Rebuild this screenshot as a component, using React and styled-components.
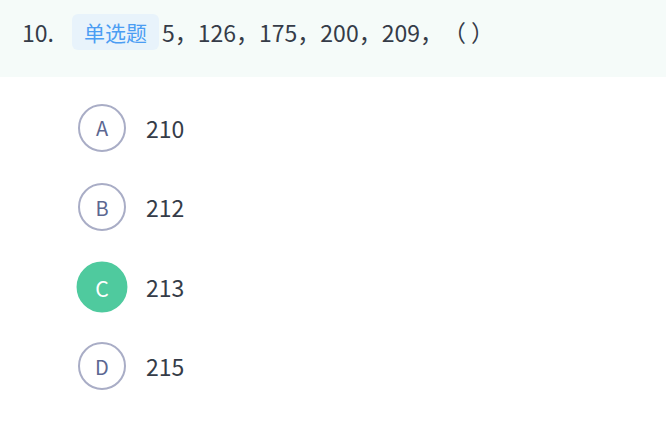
import React from 'react';
import styled, { createGlobalStyle } from 'styled-components';

const GlobalStyle = createGlobalStyle`
	body {
		margin: 0;
		background: #fff;
		font-family: 'Noto Sans CJK SC', 'Noto Sans', sans-serif;
		text-spacing-trim: space-all;
	}
`;

const Page = styled.main`
	width: 666px;
	height: 435px;
	background: #fff;
`;

const QuestionHead = styled.header`
	height: 77px;
	background: #f5fbf9;
	display: flex;
	align-items: center;
	padding: 0 0 13px 22px;
	box-sizing: border-box;
	color: #353c48;
`;

const Number = styled.span`
	width: 50px;
	font-size: 23px;
`;

const TypeBadge = styled.span`
	background: #e8f3fb;
	color: #4b9df3;
	font-size: 21px;
	border-radius: 6px;
	padding: 0 12px;
	height: 36px;
	line-height: 36px;
	margin-right: 3px;
`;

const Stem = styled.span`
	font-size: 23px;
	text-spacing-trim: space-all;
`;

const OptionList = styled.ul`
	list-style: none;
	margin: 0;
	padding: 26.5px 0 0 78px;
	display: flex;
	flex-direction: column;
	gap: 31.5px;
`;

const Option = styled.li`
	display: flex;
	align-items: center;
	height: 48px;
`;

const Bullet = styled.span`
	width: 48px;
	height: 48px;
	box-sizing: border-box;
	border-radius: 50%;
	display: flex;
	align-items: center;
	justify-content: center;
	font-size: 20px;
	border: 2px solid ${(p) => (p.selected ? '#4fca9e' : '#a9adc6')};
	background: ${(p) => (p.selected ? '#4fca9e' : '#fff')};
	color: ${(p) => (p.selected ? '#fff' : '#5c6791')};
	transform: ${(p) => (p.selected ? 'scale(1.06)' : 'none')};
	margin-right: 20px;
`;

const OptionText = styled.span`
	font-size: 23px;
	color: #353c48;
`;

const options = [
	{ key: 'A', text: '210' },
	{ key: 'B', text: '212' },
	{ key: 'C', text: '213', selected: true },
	{ key: 'D', text: '215' },
];

const App = () => {
	return (
		<Page>
			<GlobalStyle />
			<QuestionHead>
				<Number>10.</Number>
				<TypeBadge>单选题</TypeBadge>
				<Stem>5，126，175，200，209，（ ）</Stem>
			</QuestionHead>
			<OptionList>
				{options.map((o) => (
					<Option key={o.key}>
						<Bullet selected={o.selected}>{o.key}</Bullet>
						<OptionText>{o.text}</OptionText>
					</Option>
				))}
			</OptionList>
		</Page>
	);
};

export default App;
